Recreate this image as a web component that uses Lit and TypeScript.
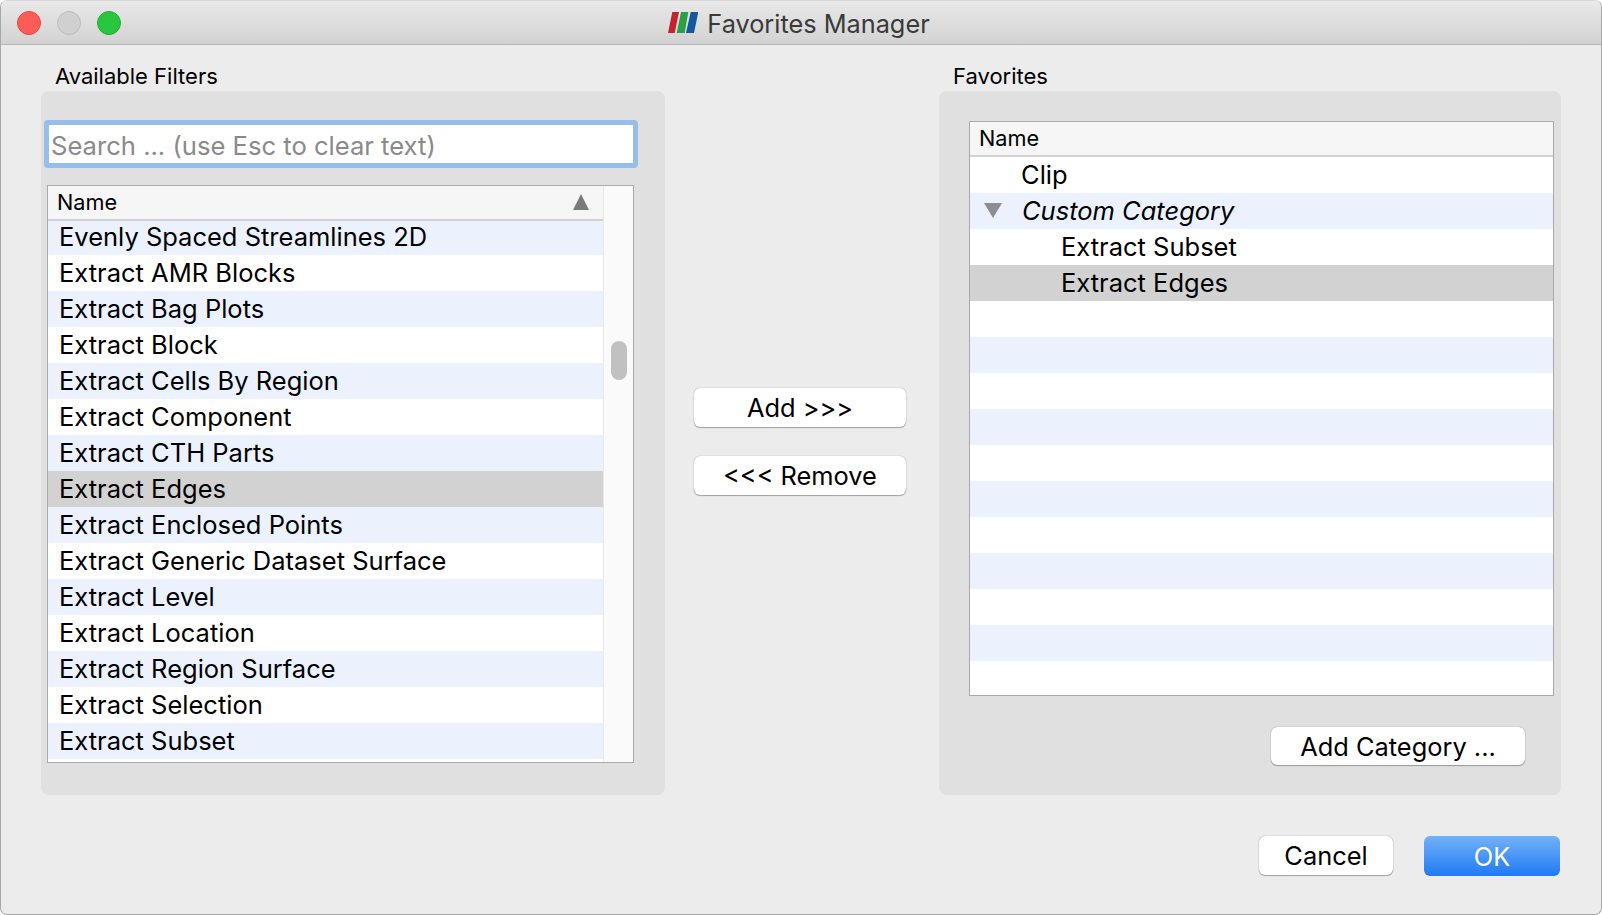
import { LitElement, html, css, svg } from 'lit';
import { customElement } from 'lit/decorators.js';

const FILTERS = [
  'Evenly Spaced Streamlines 2D',
  'Extract AMR Blocks',
  'Extract Bag Plots',
  'Extract Block',
  'Extract Cells By Region',
  'Extract Component',
  'Extract CTH Parts',
  'Extract Edges',
  'Extract Enclosed Points',
  'Extract Generic Dataset Surface',
  'Extract Level',
  'Extract Location',
  'Extract Region Surface',
  'Extract Selection',
  'Extract Subset',
];

const FAVORITES = [
  { name: 'Clip', level: 1 },
  { name: 'Custom Category', level: 1, category: true },
  { name: 'Extract Subset', level: 2 },
  { name: 'Extract Edges', level: 2, selected: true },
  ...Array.from({ length: 11 }, () => ({ name: '', level: 0 })),
];

@customElement('app-root')
export class AppRoot extends LitElement {
  static styles = css`
    :host {
      display: block;
      width: 1602px;
      height: 915px;
      background: #fff;
      font-family: Inter, 'Noto Sans', 'Liberation Sans', sans-serif;
      color: #000;
    }

    .window {
      box-sizing: border-box;
      height: 915px;
      background: #ececec;
      border: 1px solid #a8a8a8;
      border-top-color: #d8d8d8;
      border-radius: 7px;
      overflow: hidden;
    }

    .titlebar {
      box-sizing: border-box;
      height: 44px;
      position: relative;
      display: flex;
      align-items: center;
      justify-content: center;
      gap: 9px;
      padding-right: 4px;
      background: linear-gradient(#e9e9e9, #d2d2d2);
      border-bottom: 1px solid #b4b4b4;
      font-size: 25.3px;
      color: #3a3a3a;
    }

    .title {
      padding-top: 2px;
    }

    .lights {
      position: absolute;
      left: 16px;
      top: 10px;
      display: flex;
      gap: 16px;
    }

    .light {
      box-sizing: border-box;
      width: 24px;
      height: 24px;
      border-radius: 50%;
      border: 1px solid;
    }

    .close { background: #fc5b57; border-color: #e2463f; }
    .mini { background: #d0d0d0; border-color: #bcbcbc; }
    .zoom { background: #2bc63f; border-color: #22ad32; }

    .columns {
      display: grid;
      grid-template-columns: 624px 1fr 622px;
      padding: 0 40px;
    }

    .label {
      font-size: 22px;
      line-height: 24px;
      height: 24px;
      padding: 19px 0 3px 14px;
    }

    .panel {
      box-sizing: border-box;
      height: 704px;
      background: #e0e0e0;
      border-radius: 8px;
    }

    .left-panel { padding: 29px 27px 0 3px; }
    .right-panel { padding: 30px 7px 0 30px; }

    .search {
      box-sizing: border-box;
      display: block;
      width: 594px;
      height: 48px;
      margin: 0 0 17px;
      padding: 2px 0 0 2px;
      background: #fff;
      border: 5px solid #95bfea;
      border-radius: 4px;
      outline: none;
      font: inherit;
      font-size: 25.6px;
    }

    .search::placeholder {
      color: #8a8a8a;
      opacity: 1;
    }

    .table {
      box-sizing: border-box;
      background: #fff;
      border: 1px solid #a9a9a9;
      position: relative;
    }

    .filters {
      margin-left: 3px;
      width: 587px;
      height: 578px;
      display: grid;
      grid-template-columns: 1fr 30px;
    }

    .favorites {
      width: 585px;
      height: 575px;
    }

    .head {
      box-sizing: border-box;
      height: 35px;
      padding: 0 0 2px 9px;
      display: flex;
      align-items: center;
      justify-content: space-between;
      background: #f6f6f6;
      border-bottom: 2px solid #d2d2d2;
      font-size: 21.7px;
    }

    /* the list slides under the header line here, first row shows 34px */
    .filters .head {
      position: relative;
      margin-bottom: -2px;
    }

    .sort {
      width: 16px;
      height: 16px;
      margin-right: 14px;
      fill: #7a7a7a;
    }

    .row {
      box-sizing: border-box;
      height: 36px;
      padding-bottom: 2px;
      display: flex;
      align-items: center;
      font-size: 25.5px;
      white-space: nowrap;
    }

    .filters .row { padding-left: 11px; }
    .row.alt { background: #ebf2fe; }
    .row.selected { background: #d2d2d2; }
    .row.level-1 { padding-left: 51px; }
    .row.level-2 { padding-left: 91px; }
    .row.category { font-style: italic; padding-left: 52px; }

    .twist {
      position: absolute;
      left: 14px;
      width: 18px;
      height: 15px;
      fill: #8e8e8e;
    }

    .scrollbar {
      position: relative;
      background: #fafafa;
      border-left: 1px solid #e8e8e8;
    }

    .thumb {
      position: absolute;
      left: 7px;
      top: 155px;
      width: 16px;
      height: 39px;
      border-radius: 8px;
      background: #c1c1c1;
    }

    .middle {
      display: flex;
      flex-direction: column;
      align-items: center;
      gap: 29px;
      padding: 343px 4px 0 0;
    }

    button {
      box-sizing: border-box;
      height: 39px;
      padding: 0;
      background: #fff;
      border: none;
      border-radius: 6px;
      box-shadow: 0 0 1px rgba(0, 0, 0, 0.5), 0 1px 1px rgba(0, 0, 0, 0.28);
      font: inherit;
      font-size: 25.4px;
      color: #000;
    }

    .side-btn { width: 212px; }

    .add-category {
      display: block;
      width: 254px;
      height: 38px;
      margin: 31px 0 0 302px;
    }

    .footer {
      display: flex;
      justify-content: flex-end;
      align-items: flex-start;
      gap: 31px;
      padding: 41px 41px 0 0;
    }

    .cancel { width: 134px; }

    .ok {
      width: 136px;
      height: 40px;
      color: #fff;
      box-shadow: none;
      background: linear-gradient(#73b2f7, #1f7af4);
    }
  `;

  renderFilter(name: string, i: number) {
    const cls = name === 'Extract Edges' ? 'selected' : i % 2 === 0 ? 'alt' : '';
    return html`<div class="row ${cls}">${name}</div>`;
  }

  renderFavorite(item: any, i: number) {
    const classes = ['row'];
    if (item.selected) classes.push('selected');
    else if (i % 2 === 1) classes.push('alt');
    if (item.level) classes.push(`level-${item.level}`);
    if (item.category) classes.push('category');
    return html`<div class=${classes.join(' ')}>
      ${item.category
        ? html`<svg class="twist" viewBox="0 0 18 15">${svg`<path d="M0 0H18L9 15Z" />`}</svg>`
        : ''}${item.name}
    </div>`;
  }

  render() {
    return html`
      <div class="window">
        <div class="titlebar">
          <div class="lights">
            <div class="light close"></div>
            <div class="light mini"></div>
            <div class="light zoom"></div>
          </div>
          <svg width="30" height="21" viewBox="0 0 30 21">
            <path fill="#c4222e" d="M4.3 0H11L6.7 21H0Z" />
            <path fill="#2aa048" d="M13 0H20.3L16.7 21H8.7Z" />
            <path fill="#14589f" d="M22.7 0H30.3L26 21H18Z" />
          </svg>
          <span class="title">Favorites Manager</span>
        </div>

        <div class="columns">
          <section>
            <div class="label">Available Filters</div>
            <div class="panel left-panel">
              <input class="search" placeholder="Search ... (use Esc to clear text)" />
              <div class="table filters">
                <div>
                  <div class="head">
                    Name
                    <svg class="sort" viewBox="0 0 16 16"><path d="M8 0L16 16H0Z" /></svg>
                  </div>
                  ${FILTERS.map((name, i) => this.renderFilter(name, i))}
                </div>
                <div class="scrollbar"><div class="thumb"></div></div>
              </div>
            </div>
          </section>

          <div class="middle">
            <button class="side-btn">Add &gt;&gt;&gt;</button>
            <button class="side-btn">&lt;&lt;&lt; Remove</button>
          </div>

          <section>
            <div class="label">Favorites</div>
            <div class="panel right-panel">
              <div class="table favorites">
                <div class="head">Name</div>
                ${FAVORITES.map((item, i) => this.renderFavorite(item, i))}
              </div>
              <button class="add-category">Add Category ...</button>
            </div>
          </section>
        </div>

        <div class="footer">
          <button class="cancel">Cancel</button>
          <button class="ok">OK</button>
        </div>
      </div>
    `;
  }
}
